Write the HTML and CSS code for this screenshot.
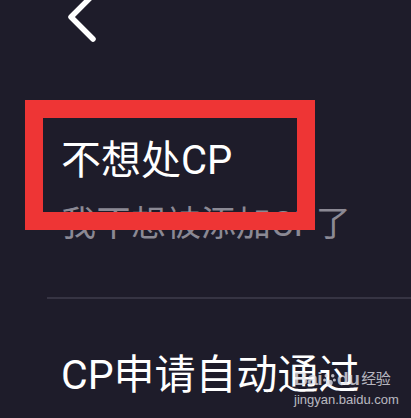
FILE: index.html
```html
<!DOCTYPE html>
<html lang="zh-CN">
<head>
    <meta charset="UTF-8">
    <meta name="viewport" content="width=device-width, initial-scale=1.0">
    <title>CP设置</title>
    <link rel="stylesheet" href="styles.css">
</head>
<body>
    <div class="screen">
        <div class="topbar">
            <svg class="back" width="40" height="44" viewBox="0 0 40 44">
                <path d="M24 -4 L3 17 L25 39" fill="none" stroke="#ffffff" stroke-width="5.5" stroke-linecap="round" stroke-linejoin="round"/>
            </svg>
        </div>

        <div class="option">
            <div class="option-title">不想处CP</div>
            <div class="option-desc">我不想被添加CP了</div>
        </div>

        <div class="divider"></div>

        <div class="option option-last">
            <div class="option-title option-title-lg">CP申请自动通过</div>
        </div>

        <!-- highlight frame around the first option -->
        <div class="mark"></div>

        <div class="watermark">
            <div class="wm-logo">Bai<svg class="paw" width="13" height="15" viewBox="0 0 12 13"><circle cx="3" cy="3" r="1.6"/><circle cx="9" cy="3" r="1.6"/><circle cx="1.5" cy="7" r="1.4"/><circle cx="10.5" cy="7" r="1.4"/><ellipse cx="6" cy="9.5" rx="3" ry="2.8"/></svg>du<span class="wm-cn">经验</span></div>
            <div class="wm-url">jingyan.baidu.com</div>
        </div>
    </div>
</body>
</html>
```

FILE: styles.css
```css
/* Base */
* {
    margin: 0;
    padding: 0;
    box-sizing: border-box;
}

body {
    background: #1e1c2a;
    font-family: Roboto, "Noto Sans CJK SC", sans-serif;
    overflow: hidden;
}

.screen {
    position: relative;
    width: 411px;
    height: 418px;
    overflow: hidden;
}

/* Top bar */
.topbar {
    height: 137px;
    padding-left: 68px;
}

.back {
    display: block;
}

/* Options */
.option {
    padding-left: 61px;
}

.option-title {
    color: #ffffff;
    font-size: 40px;
    line-height: 48px;
}

.option-desc {
    margin-top: 19px;
    color: #8b8994;
    font-size: 35px;
    line-height: 42px;
}

.option-title-lg {
    font-size: 41px;
    line-height: 49px;
}

.divider {
    height: 2px;
    margin: 51px 0 52px 47px;
    background: #363443;
}

/* Red annotation frame */
.mark {
    position: absolute;
    left: 25px;
    top: 100px;
    width: 290px;
    height: 130px;
    border: 18px solid #ee3535;
}

/* Watermark */
.watermark {
    position: absolute;
    left: 294px;
    top: 369px;
    width: 100px;
    color: rgba(225, 225, 232, 0.8);
    font-family: "Liberation Sans", "Noto Sans CJK SC", sans-serif;
}

.wm-logo {
    display: flex;
    align-items: center;
    font-size: 19px;
    font-weight: bold;
    line-height: 20px;
    letter-spacing: -0.5px;
}

.paw {
    fill: rgba(225, 225, 232, 0.8);
    margin: 0 1px;
}

.wm-cn {
    font-size: 15px;
    font-weight: normal;
    margin-left: 2px;
}

.wm-url {
    font-size: 13px;
    line-height: 15px;
    margin-top: 3px;
}
```
